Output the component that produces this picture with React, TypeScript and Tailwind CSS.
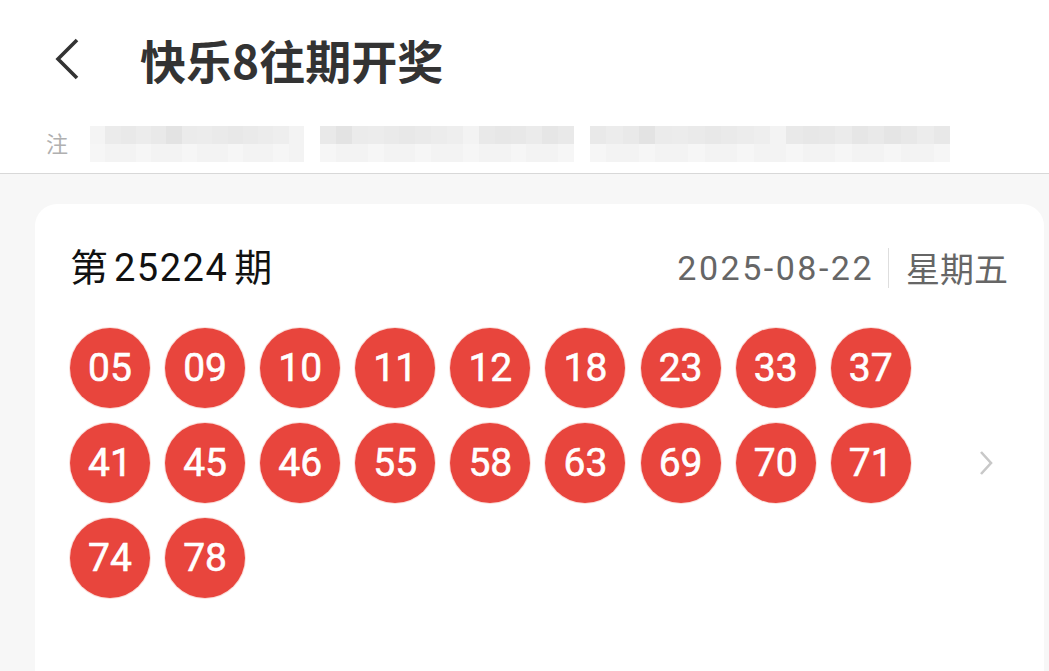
import React from "react";

const nums = ["05","09","10","11","12","18","23","33","37","41","45","46","55","58","63","69","70","71","74","78"];

const topShades = ["#f4f4f4","#ebebeb","#e9e9e9","#ececec","#e9e9e9","#e3e3e3","#ebebeb","#ececec","#eaeaea","#e8e8e8","#eaeaea","#ececec","#eeeeee","#f3f3f3","#e9e9e9","#e7e7e7","#e8e8e8","#ebebeb","#e6e6e6","#e9e9e9","#e5e5e5","#e8e8e8","#ececec","#e8e8e8","#e6e6e6","#e4e4e4"];

function Mosaic({ width, shades }: { width: number; shades: string[] }) {
  return (
    <div className="flex flex-col" style={{ width }}>
      <div className="flex h-[18px]">
        {shades.map((c, i) => (
          <div key={i} className="flex-1" style={{ background: c }} />
        ))}
      </div>
      <div className="flex h-[18px]">
        {shades.map((c, i) => (
          <div key={i} className="flex-1" style={{ background: i % 3 === 0 ? "#f6f6f6" : "#f3f3f3" }} />
        ))}
      </div>
    </div>
  );
}

export default function App() {
  return (
    <div className="w-[1049px] h-[671px] overflow-hidden bg-[#f7f7f7]" style={{ fontFamily: "Roboto, 'Noto Sans CJK SC', sans-serif" }}>
      <div className="bg-white">
        <div className="h-[118px] flex items-center">
          <div className="w-[140px] pl-[52px] flex items-center">
            <svg width="30" height="44" viewBox="0 0 30 44" fill="none">
              <path d="M25 3 L6 22 L25 41" stroke="#333" strokeWidth="3.6" strokeLinecap="butt" strokeLinejoin="miter" />
            </svg>
          </div>
          <div className="text-[46px] font-bold text-[#333] leading-none" style={{ fontFamily: "'Noto Sans CJK SC', sans-serif" }}>
            快乐8往期开奖
          </div>
        </div>
        <div className="h-[56px] flex items-start pt-[6px] pl-[46px] border-b border-[#d8d8d8]">
          <span className="text-[22px] text-[#b0b0b0] leading-[36px] mr-[22px]" style={{ fontFamily: "'Noto Sans CJK SC', sans-serif" }}>注</span>
          <div className="flex gap-[16px] blur-[0.6px] mt-[2px]">
            <Mosaic width={214} shades={topShades.slice(0, 14)} />
            <Mosaic width={254} shades={topShades.slice(4, 20)} />
            <Mosaic width={360} shades={topShades.slice(2, 24)} />
          </div>
        </div>
      </div>
      <div className="pt-[30px] pl-[35px] pr-[5px]">
        <div className="bg-white rounded-[22px] h-[520px] pt-[32px] pl-[35px] pr-[36px]">
          <div className="h-[64px] flex items-center justify-between">
            <div className="text-[38px] text-[#111] leading-none" style={{ fontFamily: "Roboto, 'Noto Sans CJK SC', sans-serif" }}>
              第<span className="ml-[6px] mr-[6px] tracking-[1.5px]">25224</span>期
            </div>
            <div className="flex items-center text-[34px] text-[#666] leading-none">
              <span className="tracking-[2.5px]">2025-08-22</span>
              <div className="w-px h-[40px] bg-[#dedede] ml-[14px] mr-[17px]" />
              <span style={{ fontFamily: "'Noto Sans CJK SC', sans-serif" }}>星期五</span>
            </div>
          </div>
          <div className="mt-[28px] flex items-center">
            <div className="grid grid-cols-[repeat(9,80px)] gap-x-[15.1px] gap-y-[15px]">
              {nums.map((n) => (
                <div key={n} className="w-[80px] h-[80px] rounded-full bg-[#e8453d] flex items-center justify-center text-white text-[39px] font-normal leading-none [-webkit-text-stroke:0.6px_white] shadow-[0_0_0_1px_rgba(240,160,150,0.35)]" style={{ fontFamily: "Roboto, sans-serif" }}>
                  {n}
                </div>
              ))}
            </div>
            <div className="flex-1 flex justify-end pr-[14px]">
              <svg width="16" height="26" viewBox="0 0 16 26" fill="none">
                <path d="M3 2 L13 13 L3 24" stroke="#c8c8c8" strokeWidth="2.6" />
              </svg>
            </div>
          </div>
        </div>
      </div>
    </div>
  );
}
